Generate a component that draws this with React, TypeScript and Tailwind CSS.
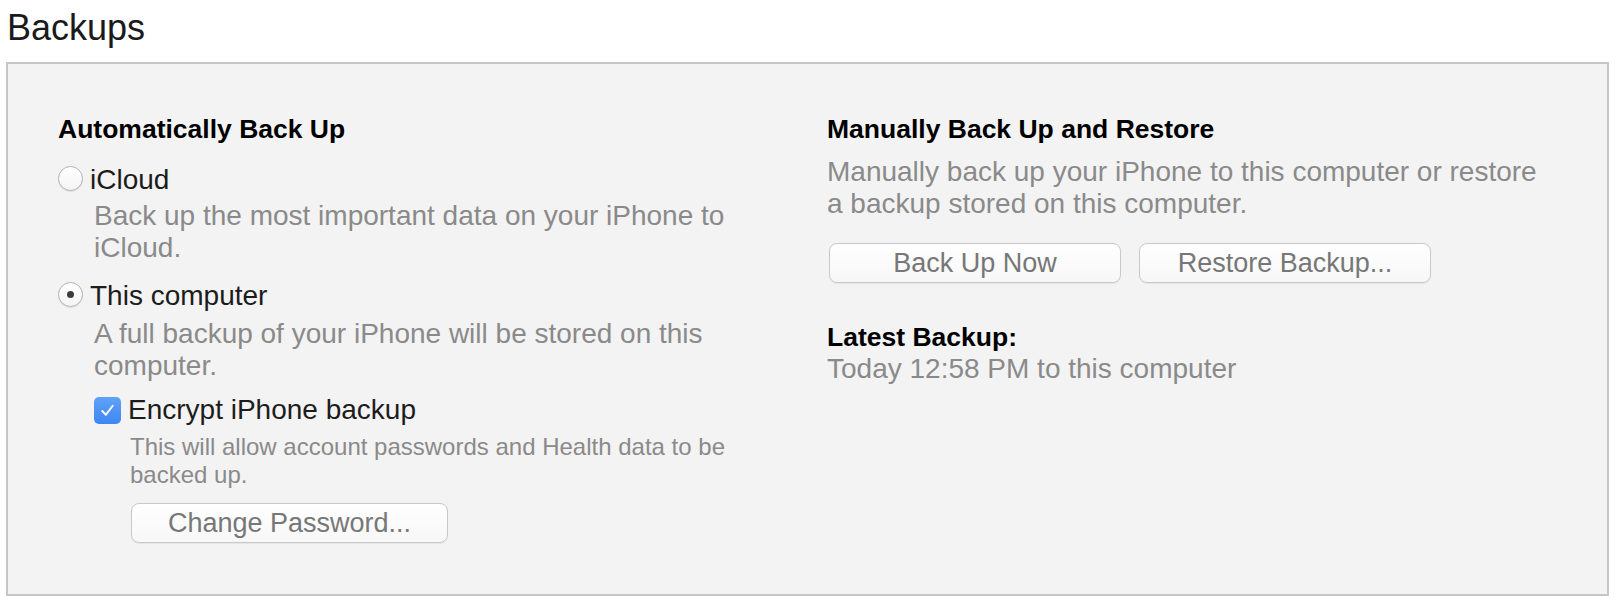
import React from "react";

const font = { fontFamily: '"Liberation Sans", Arial, sans-serif' };

const Radio = ({ checked }: { checked?: boolean }) => {
  return (
    <span className="mt-[2px] flex h-[25px] w-[25px] shrink-0 items-center justify-center rounded-full border border-[#b3b3b3] bg-gradient-to-b from-white to-[#f4f4f4] shadow-[0_1px_1px_rgba(0,0,0,0.08)]">
      {checked ? (
        <span className="h-[7px] w-[7px] rounded-full bg-[#3c3c3c]"></span>
      ) : null}
    </span>
  );
};

const Checkbox = () => {
  return (
    <span className="flex h-[27px] w-[27px] shrink-0 items-center justify-center rounded-[5px] bg-gradient-to-b from-[#5fa2f7] to-[#3f86f2]">
      <svg width="19" height="19" viewBox="0 0 20 20">
        <path
          d="M4.5 10.5 L8.3 14.5 L15.5 5"
          fill="none"
          stroke="white"
          strokeWidth="2"
          strokeLinecap="round"
          strokeLinejoin="round"
        />
      </svg>
    </span>
  );
};

interface MacButtonProps {
  label: string;
  width: string;
}

const MacButton = (props: MacButtonProps) => {
  return (
    <button
      className={
        "flex h-[40px] items-center justify-center rounded-[8px] border border-[#c9c9c9] bg-gradient-to-b from-white to-[#f7f7f7] text-[27px] text-[#777777] shadow-[0_1px_1px_rgba(0,0,0,0.06)] " +
        props.width
      }
    >
      {props.label}
    </button>
  );
};

const App = () => {
  return (
    <div className="min-h-[604px] bg-white pl-[6px] pr-[11px]" style={font}>
      <h1 className="pl-[1px] pt-[6px] text-[36px] font-normal leading-[44px] text-[#1a1a1a]">
        Backups
      </h1>
      <div className="mt-[12px] flex border-2 border-[#c6c6c6] bg-[#f3f3f3] pb-[51px] pt-[49px]">
        <div className="w-[819px] shrink-0 pl-[50px]">
          <div className="text-[26.5px] font-bold leading-[32px] text-black">
            Automatically Back Up
          </div>
          <div className="mt-[19px] flex items-start gap-[7px]">
            <Radio></Radio>
            <span className="text-[28px] leading-[32px] text-[#1c1c1c]">
              iCloud
            </span>
          </div>
          <p className="mt-[4px] max-w-[696px] pl-[36px] text-[28px] leading-[32px] text-[#8a8a8a]">
            Back up the most important data on your iPhone to iCloud.
          </p>
          <div className="mt-[16px] flex items-start gap-[7px]">
            <Radio checked></Radio>
            <span className="text-[28px] leading-[32px] text-[#1c1c1c]">
              This computer
            </span>
          </div>
          <p className="mt-[6px] max-w-[696px] pl-[36px] text-[28px] leading-[32px] text-[#8a8a8a]">
            A full backup of your iPhone will be stored on this computer.
          </p>
          <div className="mt-[12px] pl-[36px]">
            <div className="flex items-center gap-[7px]">
              <Checkbox></Checkbox>
              <span className="text-[28px] leading-[32px] text-[#1c1c1c]">
                Encrypt iPhone backup
              </span>
            </div>
            <p className="mt-[7px] max-w-[656px] pl-[36px] text-[24px] leading-[28px] text-[#8a8a8a]">
              This will allow account passwords and Health data to be backed
              up.
            </p>
            <div className="mt-[14px] pl-[37px]">
              <MacButton label="Change Password..." width="w-[317px]"></MacButton>
            </div>
          </div>
        </div>
        <div className="flex-1">
          <div className="text-[26.5px] font-bold leading-[32px] text-black">
            Manually Back Up and Restore
          </div>
          <p className="mt-[11px] w-[725px] text-[28px] leading-[32px] text-[#8a8a8a]">
            Manually back up your iPhone to this computer or restore a backup
            stored on this computer.
          </p>
          <div className="mt-[23px] flex gap-[18px] pl-[2px]">
            <MacButton label="Back Up Now" width="w-[292px]"></MacButton>
            <MacButton label="Restore Backup..." width="w-[292px]"></MacButton>
          </div>
          <div className="mt-[38px] text-[26.5px] font-bold leading-[32px] text-black">
            Latest Backup:
          </div>
          <div className="text-[28px] leading-[32px] text-[#8a8a8a]">
            Today 12:58 PM to this computer
          </div>
        </div>
      </div>
    </div>
  );
};

export default App;
